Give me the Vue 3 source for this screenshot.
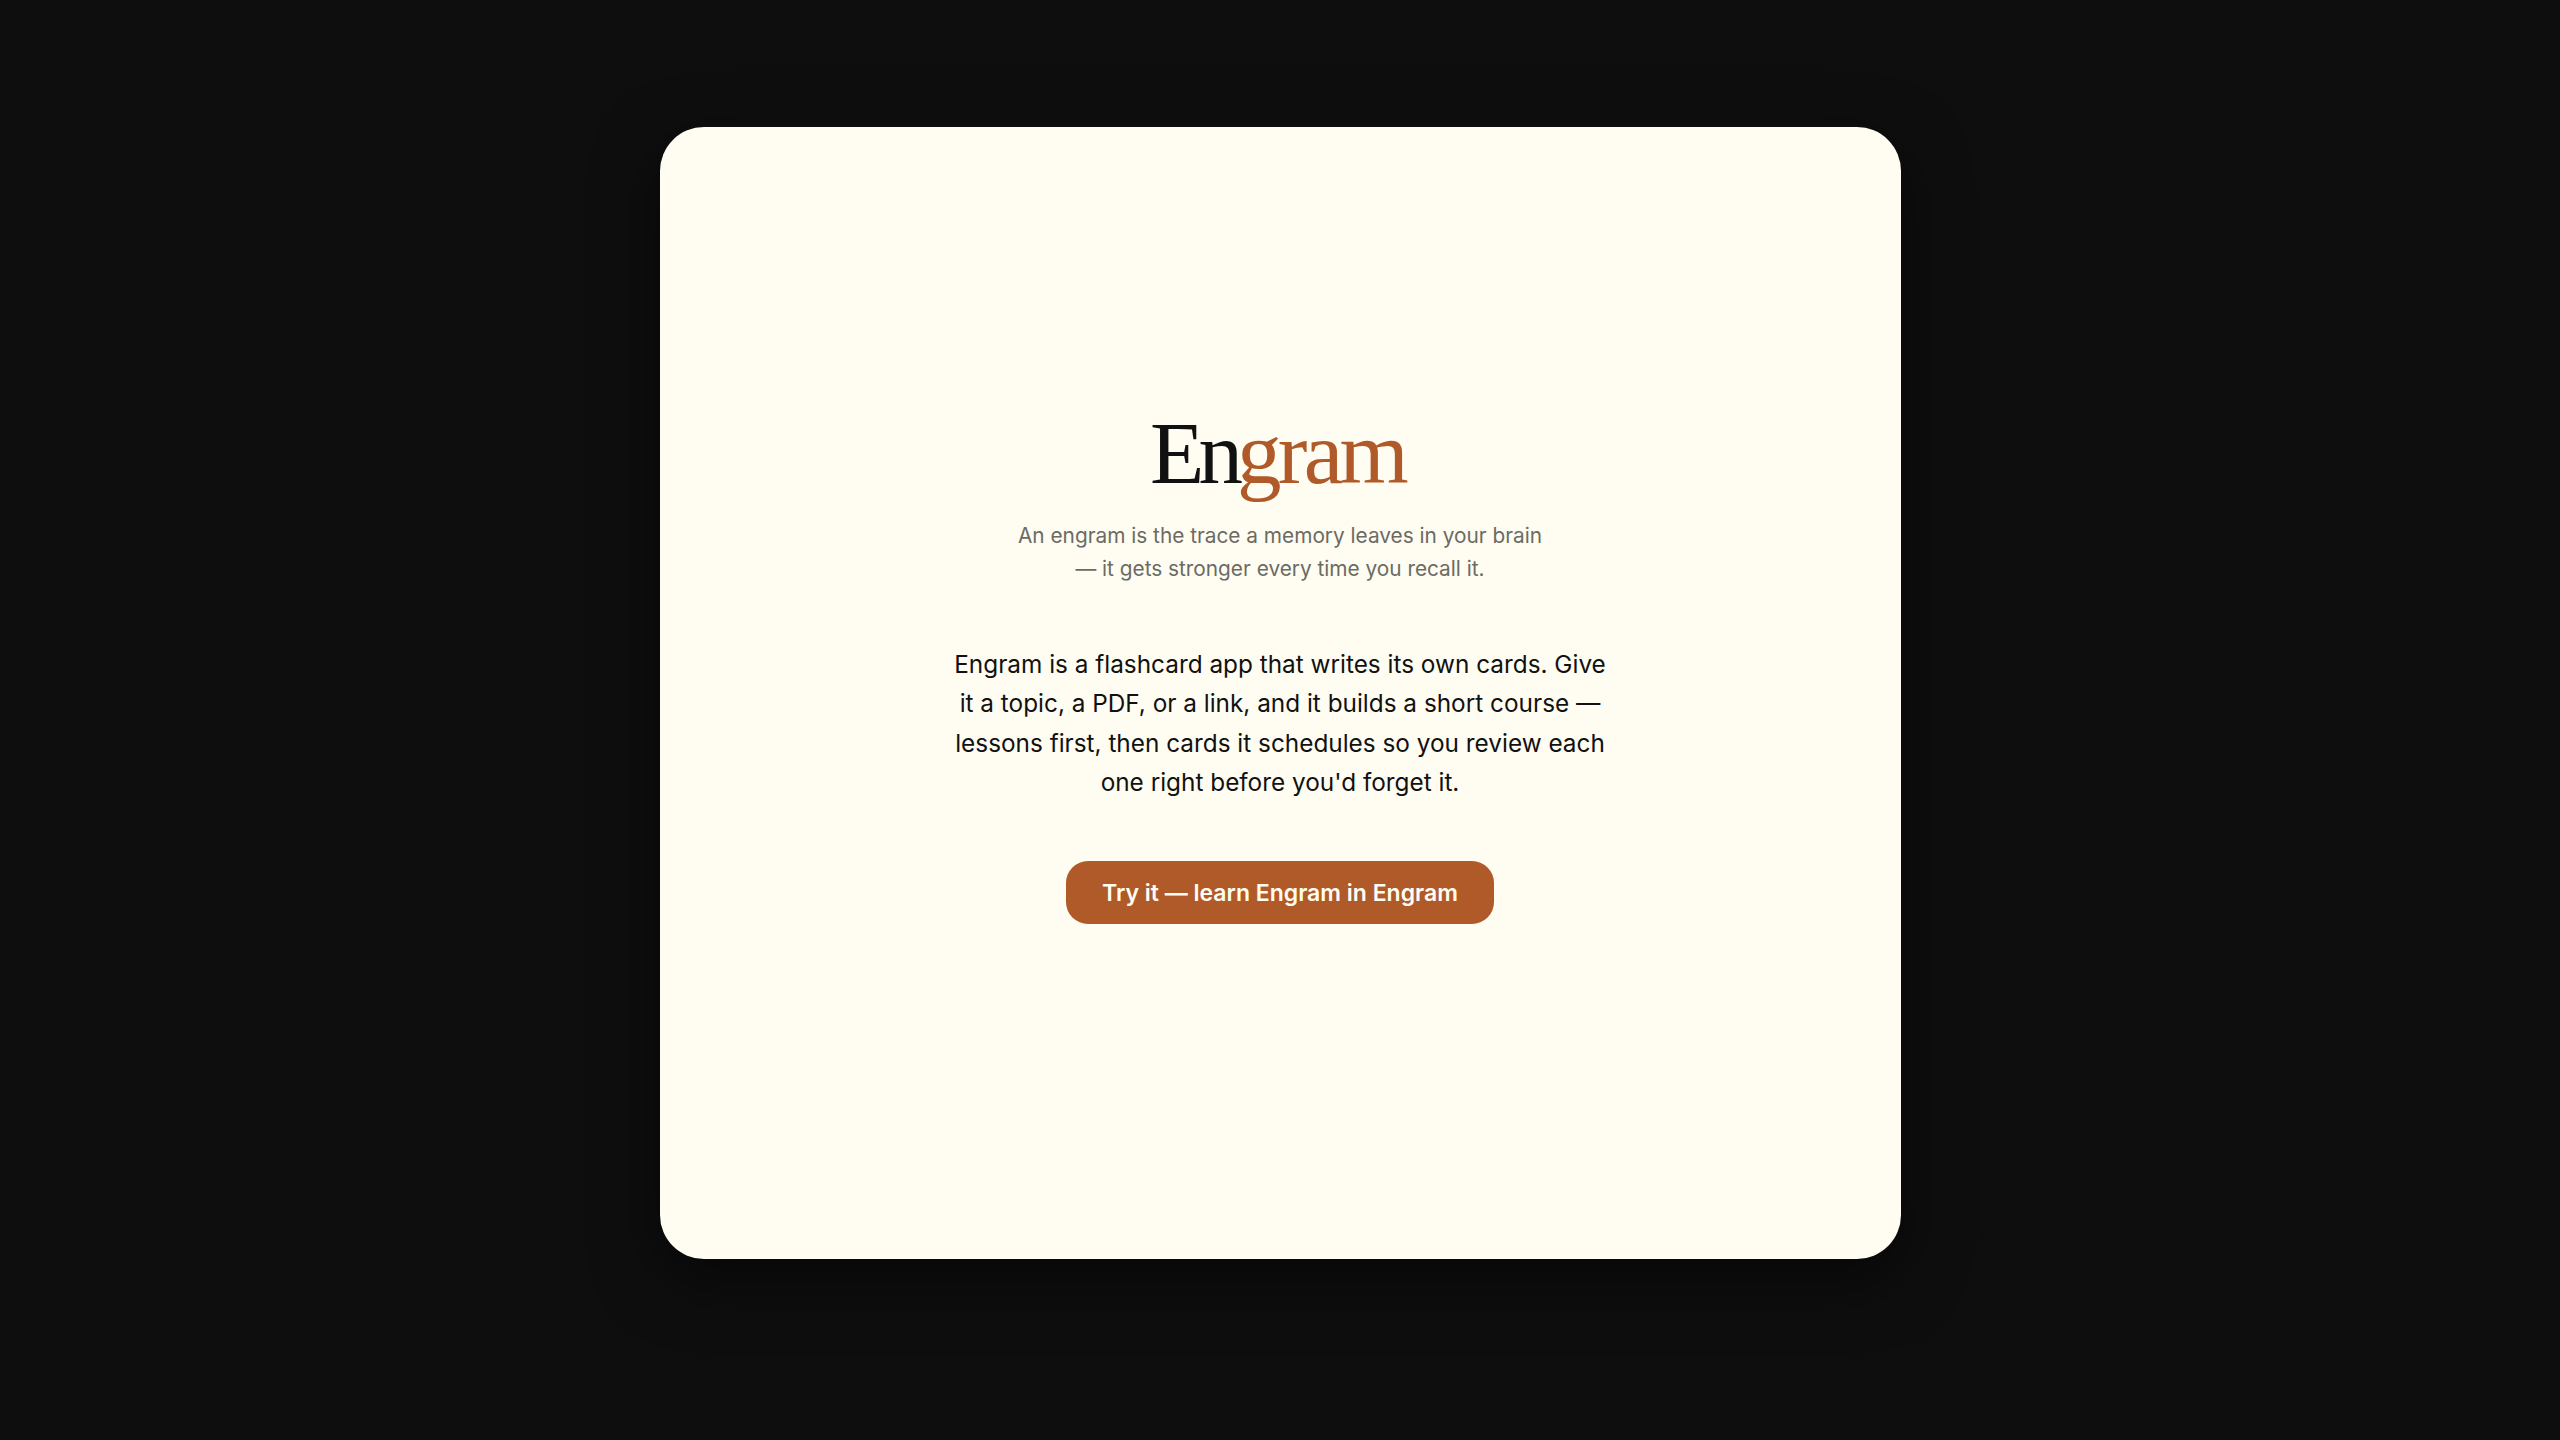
<template>
  <div class="page">
    <main class="card">
      <h1 class="logo">En<span class="accent">gram</span></h1>
      <p class="tagline">
        An engram is the trace a memory leaves in your brain<br />
        — it gets stronger every time you recall it.
      </p>
      <p class="intro">
        Engram is a flashcard app that writes its own cards. Give it a topic, a PDF, or a link,
        and it builds a short course — lessons first, then cards it schedules so you review each
        one right before you'd forget it.
      </p>
      <button class="cta" type="button">Try it — learn Engram in Engram</button>
    </main>
  </div>
</template>

<script setup>
</script>

<style scoped>
.page {
  display: flex;
  justify-content: center;
  box-sizing: border-box;
  height: 1440px;
  padding-top: 127px;
  background: #0e0e0e;
  font-family: Inter, "Noto Sans", sans-serif;
}
.card {
  display: flex;
  flex-direction: column;
  align-items: center;
  box-sizing: border-box;
  width: 1241px;
  height: 1132px;
  padding-top: 276px;
  background: #fffdf2;
  border-radius: 44px;
  box-shadow: 0 20px 64px rgba(0, 0, 0, 0.5);
}
.logo {
  margin: 0 5px 0 0;
  font-family: "Liberation Serif", serif;
  font-size: 89px;
  font-weight: 400;
  line-height: 100px;
  letter-spacing: -6px;
  color: #111111;
}
.accent {
  letter-spacing: -3.7px;
  color: #b05a2a;
}
.tagline {
  margin: 17px 0 0;
  font-size: 20.8px;
  line-height: 32.6px;
  text-align: center;
  color: #6b6b63;
}
.intro {
  width: 660px;
  margin: 60px 0 0;
  font-size: 24.35px;
  line-height: 39.2px;
  text-align: center;
  color: #111111;
}
.cta {
  width: 428px;
  height: 63px;
  margin-top: 59px;
  padding: 0;
  border: none;
  border-radius: 22px;
  background: #b05a2a;
  color: #fffdf2;
  font-family: inherit;
  font-size: 23px;
  font-weight: 600;
}
</style>

<style>
body {
  background: #0e0e0e;
}
</style>
